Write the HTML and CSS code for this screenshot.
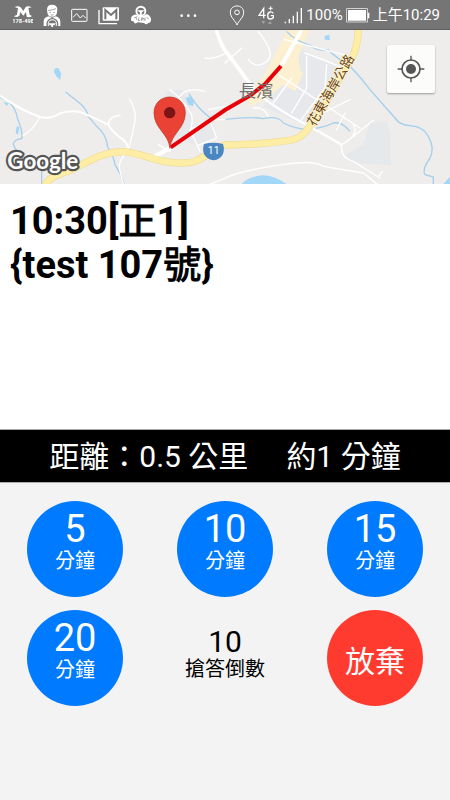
FILE: index.html
```html
<!DOCTYPE html>
<html lang="zh-Hant">
<head>
<meta charset="utf-8">
<meta name="viewport" content="width=device-width, initial-scale=1">
<title>派遣任務</title>
<link rel="stylesheet" href="styles.css">
</head>
<body>
<div class="app">
  <header class="status">
    <div class="status-group notices">
      <svg width="20" height="20" viewBox="0 0 60 60" fill="#fff">
        <path d="M5 6 Q15 1 23 7 L31 18 L38 6 Q46 1 56 7 L46 9 L50 29 L57 33 Q51 39 41 35 L39 21 L31 32 L22 21 L19 32 Q11 39 3 34 L12 29 L15 10 Z"/>
        <text class="tiny" x="30" y="55" text-anchor="middle">178-49E</text>
      </svg>
      <svg width="18" height="23" viewBox="0 0 54 69" fill="#fff">
        <path d="M12 16 Q12 2 27 2 Q43 2 43 16 L42 26 Q40 38 27 38 Q15 38 13 26 Z"/>
        <path d="M2 66 V52 Q2 40 17 37 L27 42 L38 37 Q52 41 52 53 V66 Z"/>
        <path d="M15 19 Q28 19 39 14 M19 25 H24 M31 25 H36 M23 32 Q27 35 32 32" fill="none" stroke="#757575" stroke-width="2"/>
        <circle cx="28" cy="60" r="16" fill="none" stroke="#757575" stroke-width="4"/>
        <circle cx="28" cy="60" r="11" fill="#757575"/>
        <path d="M17 58 H39 L34 64 H30 V70 H25 V64 H20 Z"/>
      </svg>
      <svg width="17" height="15" viewBox="0 0 51 45" fill="none" stroke="#fff" stroke-width="3">
        <rect x="2" y="4" width="46" height="36" rx="2"/>
        <path d="M6 28 L17 17 L28 30 L36 22 L44 30"/>
      </svg>
      <svg width="22" height="19" viewBox="0 0 66 57" fill="none" stroke="#fff">
        <path d="M3 12 V53 H57" stroke-width="4"/>
        <rect x="14" y="4" width="49" height="40" rx="3" fill="#fff" stroke="none"/>
        <path d="M22 40 V12 L39 27 L55 12 V40" stroke="#757575" stroke-width="6"/>
      </svg>
      <svg width="22" height="21" viewBox="0 0 69 63" fill="#fff">
        <circle cx="34" cy="18" r="14" fill="none" stroke="#fff" stroke-width="6"/>
        <path d="M22 15 H46 L37 22 V31 H31 V22 Z"/>
        <path d="M4 37 Q7 29 19 28 L29 33 H42 L51 27 Q65 31 66 44 Q66 54 57 55 Q52 63 44 55 L24 53 Q16 61 11 50 L3 47 Z"/>
        <path d="M13 39 L23 35 M18 37 L22 46 M28 38 L26 47 L32 47 M36 38 V48 M40 47 V38 L47 47 V38 M52 36 L58 43" fill="none" stroke="#757575" stroke-width="2"/>
      </svg>
      <svg class="more" width="17" height="5" viewBox="0 0 51 15" fill="#fff">
        <circle cx="5" cy="8" r="4"/><circle cx="25" cy="8" r="4"/><circle cx="45" cy="8" r="4"/>
      </svg>
    </div>
    <div class="status-group system">
      <svg width="16" height="21" viewBox="0 0 48 63" fill="none" stroke="#fff" stroke-width="3">
        <path d="M24 60 C19 46 4 38 4 22 C4 10 13 3 24 3 C35 3 44 10 44 22 C44 38 29 46 24 60 Z"/>
        <circle cx="24" cy="22" r="7"/>
      </svg>
      <svg class="network" width="17" height="19" viewBox="0 0 51 57" fill="none" stroke="#fff" stroke-width="4">
        <path d="M17 37 V7 L3 28 H23"/>
        <path d="M46 22 Q42 17 36 18 Q29 20 29 29 Q29 39 37 39 Q44 39 46 35 V29 H38"/>
        <path d="M38 1 V13 M32 7 H44" stroke-width="3"/>
        <path d="M10 46 H22 L16 53 Z M30 53 H42 L36 46 Z" fill="#aaa" stroke="none"/>
      </svg>
      <svg class="signal" width="19" height="17" viewBox="0 0 57 51" fill="#fff">
        <path d="M2 44h4v5h-4z M14 36h4v13h-4z M26 26h4v23h-4z M38 14h4v35h-4z M50 3h4v46h-4z"/>
      </svg>
      <span>100%</span>
      <svg width="24" height="15" viewBox="0 0 72 45">
        <rect x="2" y="2" width="62" height="40" fill="none" stroke="#fff" stroke-width="2"/>
        <path d="M6 6 H60 V38 H6 Z M65 14 h5 v17 h-5 Z" fill="#fff"/>
      </svg>
      <time>上午10:29</time>
    </div>
  </header>

  <section class="map" aria-label="地圖">
    <svg class="map-art" viewBox="0 6 1350 462" preserveAspectRatio="xMidYMid slice">
      <rect y="0" width="1350" height="470" fill="#eeedeb"/>
      <g fill="#e6e8ec">
        <path d="M495 190 L545 185 Q580 240 580 290 L640 290 L648 330 L590 350 L520 330 Z"/>
        <path d="M900 60 L970 95 L1040 110 L1010 190 L930 300 L790 235 L860 140 Z"/>
        <path d="M1110 285 L1160 280 L1172 320 V412 L1060 405 L1035 380 L1090 350 Z" fill="#e5e9ec"/>
      </g>
      <path d="M860 6 H930 L895 85 L900 125 L910 135 L885 190 L850 170 L795 215 L750 235 L735 205 L790 145 L825 80 Z" fill="#fcf0d0"/>
      <g fill="#a3d7f8">
        <path d="M164 122 L174 119 L184 137 L180 156 L169 145 L162 132 Z"/>
        <path d="M557 210 L568 205 L582 218 L579 235 L565 230 Z"/>
        <path d="M50 295 L58 297 L54 320 L47 315 Z M10 222 L26 226 L20 234 Z"/>
        <path d="M974 24 L988 20 L990 36 L974 35 Z"/>
        <path d="M725 468 Q745 444 790 442 Q825 444 860 468 Z M1330 468 L1350 446 V468 Z"/>
      </g>
      <g fill="none" stroke="#a5cfec" stroke-width="4">
        <path d="M0 208 Q45 225 52 270 Q70 315 65 332 Q40 335 40 350 L50 370 M125 468 V430"/>
        <path d="M197 192 L245 230 Q260 245 265 265 L290 295 Q320 320 323 358 Q340 380 345 410 Q362 435 372 468"/>
        <path d="M567 197 Q590 240 635 273"/>
        <path d="M860 10 Q880 35 930 52 Q950 70 985 66 Q1010 90 1050 115 Q1080 145 1110 185 L1185 270 Q1200 292 1230 293 Q1270 295 1285 325 Q1305 360 1290 390 Q1265 425 1275 440 L1300 447 V468"/>
        <path d="M675 275 Q750 265 790 272 Q835 262 850 285 Q880 300 920 305 Q970 300 1000 285 Q1025 280 1050 310"/>
      </g>
      <g fill="none" stroke="#fff" stroke-width="4" stroke-linecap="round">
        <path d="M0 203 Q60 245 120 267 Q150 275 180 256 Q225 242 260 260 L325 290 Q335 310 360 328 Q380 340 385 362" stroke-width="6"/>
        <path d="M118 270 Q100 305 70 322 M388 212 Q410 250 405 278 Q395 330 387 358 M325 290 Q325 265 360 262 M385 368 Q350 400 360 430 L370 468"/>
        <path d="M475 350 L510 370 M510 185 Q550 215 575 260 Q580 290 570 305 L600 370 M540 205 Q560 175 615 190 M570 305 L600 290 L632 285 L650 330 L595 352 M615 90 Q640 95 675 77 M625 245 L675 235 M650 275 H675"/>
        <path d="M650 10 Q665 60 685 80 Q730 140 765 190" stroke-width="11"/>
        <path d="M765 190 Q825 240 900 280 Q965 315 1025 350" stroke-width="7"/>
        <path d="M775 10 Q830 80 800 100 Q770 125 745 95 M675 105 L725 60 M855 35 L1050 85 M915 75 Q970 95 1035 122 M835 140 L935 205 L1080 300 M875 255 L920 180 L920 85 M820 225 L875 150 M900 280 L975 180 L980 110 M910 285 L1050 215 M1010 305 L1035 255 M1060 325 L1120 277 M1025 350 Q1020 390 1060 400 L1140 450 M1025 350 Q1080 320 1060 290 M1135 445 L1147 430 M675 450 Q730 425 850 410 Q940 395 970 415 L1090 435 L1130 468 M630 468 L675 452 M760 240 Q790 235 805 265"/>
        <path d="M465 385 L515 357" stroke-width="13" stroke-linecap="butt"/>
        <path d="M845 112 L905 6" stroke-width="12" stroke-linecap="butt"/>
      </g>
      <g fill="none">
        <path d="M135 472 Q145 450 180 438 C245 420 290 370 370 371 C430 375 475 408 550 405 C605 405 610 378 675 351 Q775 350 860 338 C925 333 930 280 970 240 Q1000 180 1050 100 Q1075 60 1075 0" stroke="#f0dc96" stroke-width="22"/>
        <path d="M135 472 Q145 450 180 438 C245 420 290 370 370 371 C430 375 475 408 550 405 C605 405 610 378 675 351 Q775 350 860 338 C925 333 930 280 970 240 Q1000 180 1050 100 Q1075 60 1075 0" stroke="#fdeda5" stroke-width="18"/>
      </g>
      <path d="M512 358 L675 246 L750 203 L795 168 L843 114" fill="none" stroke="#e60008" stroke-width="12"/>
      <text class="town" x="716" y="206">長濱</text>
      <text class="road-name" transform="translate(944 298) rotate(-60)" x="0" y="0">花東海岸公路</text>
      <path d="M612 348 Q640 340 669 348 Q675 365 668 380 Q659 394 641 397 Q622 394 613 380 Q606 365 612 348 Z" fill="#4b86c2"/>
      <text class="route" x="641" y="379" text-anchor="middle">11</text>
      <path d="M510 361 C505 315 463 303 462 255 C462 226 483 207 509 207 C535 207 556 226 556 255 C555 303 514 315 510 361 Z" fill="#ea4335" stroke="#b93126" stroke-width="2"/>
      <circle cx="509" cy="254" r="17" fill="#7b1515"/>
      <text class="brand" x="22" y="424">Google</text>
    </svg>
    <button class="locate" type="button" aria-label="我的位置">
      <svg width="28" height="28" viewBox="0 0 84 84" fill="none" stroke="#555" stroke-width="5">
        <circle cx="42" cy="42" r="27"/>
        <circle cx="42" cy="42" r="15" fill="#555" stroke="none"/>
        <path d="M42 2 V16 M42 68 V82 M2 42 H16 M68 42 H82" stroke-width="4"/>
      </svg>
    </button>
  </section>

  <main class="task">
    <h1>10:30[<span class="han">正</span>1]<br>{test 107<span class="han">號</span>}</h1>
  </main>

  <section class="trip">
    <span>距離：0.5 公里</span>
    <span>約1 分鐘</span>
  </section>

  <section class="actions">
    <button class="round" type="button"><b>5</b><span>分鐘</span></button>
    <button class="round" type="button"><b>10</b><span>分鐘</span></button>
    <button class="round" type="button"><b>15</b><span>分鐘</span></button>
    <button class="round" type="button"><b>20</b><span>分鐘</span></button>
    <div class="countdown"><b>10</b><span>搶答倒數</span></div>
    <button class="round give-up" type="button">放棄</button>
  </section>
</div>
</body>
</html>
```
FILE: styles.css
```css
* { box-sizing: border-box; }

body {
  margin: 0;
  background: #f3f3f3;
  color: #000;
  font-family: Roboto, "Noto Sans CJK TC", sans-serif;
}

.app {
  display: flex;
  flex-direction: column;
  min-height: 100vh;
}

svg { display: block; flex: none; }

/* Status bar */
.status {
  display: flex;
  justify-content: space-between;
  align-items: center;
  height: 30px;
  padding: 1px 10px 0 13px;
  background: #757575;
  border-bottom: 1px solid #5e5e5e;
  color: #fff;
  font-size: 15px;
  line-height: 20px;
  white-space: nowrap;
}

.status-group { display: flex; align-items: center; }
.notices { gap: 10px; }
.more { margin-left: 18px; }
.system { gap: 3px; }
.network { margin-left: 10px; }
.signal { margin-left: 6px; }
.tiny { font-size: 17px; font-weight: 700; }

/* Map */
.map { position: relative; }
.map-art { width: 100%; height: 154px; }

.town { font-size: 52px; fill: #737373; }

.road-name {
  font-size: 40px;
  fill: #6b4512;
  stroke: #fff6d8;
  stroke-width: 4px;
  paint-order: stroke;
}

.route { font-size: 31px; fill: #fff; }

.brand {
  font-family: Lato, sans-serif;
  font-size: 67px;
  font-weight: 700;
  fill: #fff;
  stroke: #555;
  stroke-width: 13px;
  stroke-linejoin: round;
  paint-order: stroke;
}

.locate {
  position: absolute;
  top: 15px;
  right: 15px;
  display: grid;
  place-items: center;
  width: 48px;
  height: 48px;
  padding: 0;
  border: 0;
  border-radius: 2px;
  background: #fcfcfa;
  box-shadow: 0 1px 2px rgba(0, 0, 0, .35);
}

/* Task */
.task {
  min-height: 245px;
  padding: 15px 10px;
  background: #fff;
}

h1 {
  margin: 0;
  font-size: 38px;
  font-weight: 700;
  line-height: 44px;
}

.han {
  font-weight: 400;
  -webkit-text-stroke: 1px #000;
}

.trip {
  display: flex;
  justify-content: center;
  gap: 38px;
  padding: 5px 0 3px;
  border: 1px solid #aaa;
  border-width: 1px 0;
  background: #000;
  color: #fff;
  font-size: 30px;
  line-height: 44px;
  white-space: nowrap;
}

/* Answer buttons */
.actions {
  display: grid;
  grid-template-columns: repeat(3, 1fr);
  justify-items: center;
  gap: 13px 0;
  padding: 18px 0;
}

.round,
.countdown {
  display: flex;
  flex-direction: column;
  align-items: center;
  justify-content: center;
  height: 96px;
  padding: 0;
  font-family: inherit;
  font-size: 20px;
  line-height: 24px;
}

.round {
  width: 96px;
  padding-bottom: 16px;
  border: 0;
  border-radius: 50%;
  background: #007aff;
  color: #fff;
}

.round b { font-size: 38px; font-weight: 400; line-height: 40px; }
.countdown b { font-size: 30px; font-weight: 400; line-height: 30px; }
.countdown { padding-bottom: 8px; }

.give-up {
  padding: 8px 0 0;
  background: #ff3b30;
  font-size: 30px;
}
```
